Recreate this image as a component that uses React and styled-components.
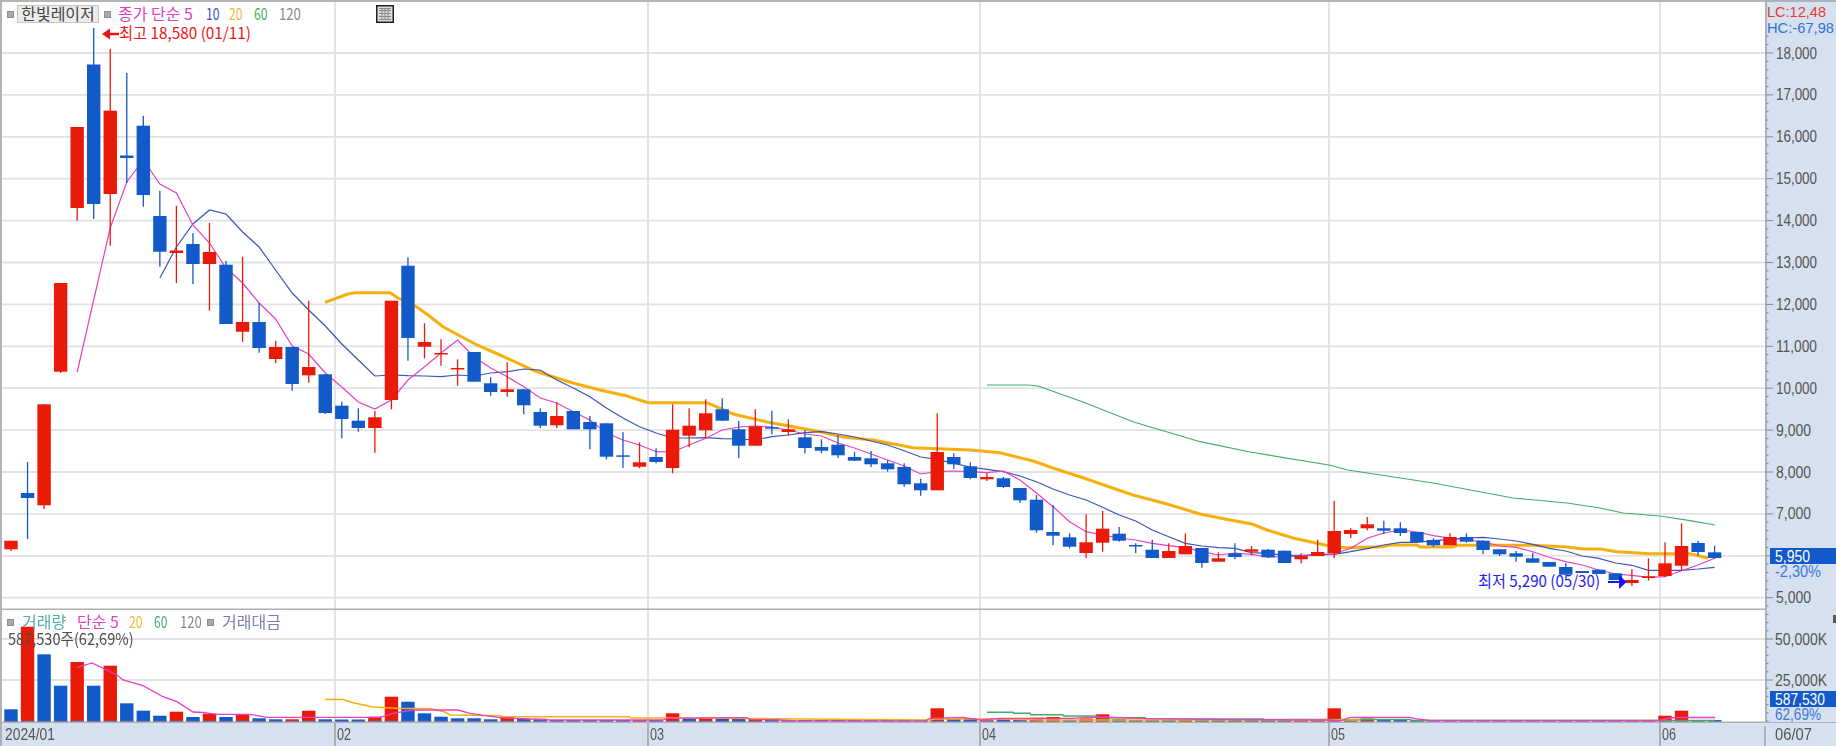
import React from "react";
import styled, { createGlobalStyle } from "styled-components";

const GlobalStyle = createGlobalStyle`
  html, body {
    margin: 0;
    padding: 0;
    background: #fff;
  }
`;

const FONT = `"Liberation Sans", "Noto Sans CJK KR", sans-serif`;
const KR_FONT = `"Noto Sans CJK KR", "Liberation Sans", sans-serif`;

const RED = "#e91b08";
const BLUE = "#1259c9";
const PINK = "#e93fc4";
const NAVY = "#3a55b8";
const ORANGE = "#f5b010";
const GREEN = "#41ad66";

const cx = (i) => 11 + 16.54 * i;

// r/b, body top, body bottom, high, low (in page pixels)
const CANDLES = [
  ["r", 540.7, 549.3, 540.7, 551],
  ["b", 493, 498, 462, 539],
  ["r", 404.3, 505.3, 404.3, 509],
  ["r", 283, 371.7, 283, 373],
  ["r", 127, 208, 127, 220.7],
  ["b", 64.5, 204, 28, 219],
  ["r", 110.7, 194, 49, 245.7],
  ["b", 155.5, 158, 73, 183],
  ["b", 125.7, 195, 115.7, 206.7],
  ["b", 216, 251.7, 190.7, 266.7],
  ["r", 250.5, 253, 205.7, 283],
  ["b", 244, 264, 233, 284],
  ["r", 252, 264, 223, 310.7],
  ["b", 264.7, 324, 261, 324],
  ["r", 322, 331.7, 256.7, 341.7],
  ["b", 322, 348, 303, 352.7],
  ["r", 347, 359, 340.7, 363],
  ["b", 347, 384, 347, 390.7],
  ["r", 367, 375.3, 300.7, 382.7],
  ["b", 374.3, 413, 374.3, 414],
  ["b", 405.7, 419, 401.7, 438.3],
  ["b", 420.7, 428, 408.3, 431.7],
  ["r", 417.3, 428, 411, 452.7],
  ["r", 300.7, 400, 300.7, 409.3],
  ["b", 265.7, 338, 257.3, 360.7],
  ["r", 342, 346.7, 323.3, 358.3],
  ["r", 353, 354.5, 339.3, 365.7],
  ["r", 368, 369.5, 359.3, 385.7],
  ["b", 352, 381.7, 352, 381.7],
  ["b", 383.3, 392, 377.3, 395.7],
  ["r", 389.3, 392, 362.3, 396.7],
  ["b", 389.3, 405.3, 389.3, 414.3],
  ["b", 412, 425.7, 408.3, 428],
  ["r", 416, 425.3, 402.3, 428],
  ["b", 411, 429.3, 411, 429.3],
  ["b", 422, 429.3, 416, 449.3],
  ["b", 423.3, 456.7, 423.3, 459.3],
  ["b", 455.3, 456.8, 432.3, 468],
  ["r", 462.3, 466.7, 442.3, 468.3],
  ["b", 457, 462, 448.3, 463.3],
  ["r", 429.7, 468, 404.3, 473.3],
  ["r", 425.7, 435.7, 408.3, 447.3],
  ["r", 413.3, 430.3, 399.3, 438.3],
  ["b", 409.3, 420.7, 398.3, 421],
  ["b", 429.3, 445.7, 421, 458.3],
  ["r", 426.3, 445.7, 409.3, 445.7],
  ["b", 427.2, 428.7, 410.7, 434.3],
  ["r", 429.3, 432, 419.3, 435.7],
  ["b", 437.3, 448, 430, 453.3],
  ["b", 447, 450.7, 439.3, 453.3],
  ["b", 444.7, 455.3, 435, 458],
  ["b", 457, 460.7, 452, 461],
  ["b", 458.3, 464.3, 451, 467],
  ["b", 463.3, 469.3, 460, 471.7],
  ["b", 467, 484.3, 463.3, 486.7],
  ["b", 483.3, 490.3, 478.7, 495.7],
  ["r", 452, 490.3, 413.3, 490.3],
  ["b", 457, 464.3, 453.3, 469],
  ["b", 466.3, 478, 462.3, 479.3],
  ["r", 477, 479.3, 473.3, 481],
  ["b", 478.3, 487, 477, 488],
  ["b", 488, 500.3, 488, 503],
  ["b", 499.7, 530.3, 495, 532.7],
  ["b", 532, 535.7, 505, 545.3],
  ["b", 537.3, 546.7, 533.3, 548.3],
  ["r", 542.3, 553, 514.3, 558],
  ["r", 528.7, 542.7, 511, 551.7],
  ["b", 533.7, 540.7, 527, 541.7],
  ["b", 545, 546.5, 543.3, 553.3],
  ["b", 549.7, 558, 539.7, 558],
  ["r", 551, 558, 543.3, 558],
  ["r", 546, 554.3, 533.3, 554.3],
  ["b", 548, 563, 548, 567.7],
  ["r", 558.3, 561.7, 552.3, 561.7],
  ["b", 553.3, 557, 543.3, 559.3],
  ["r", 549.3, 551.7, 546, 555.3],
  ["b", 549.7, 557.3, 549, 558],
  ["b", 550.7, 563, 550.7, 563],
  ["r", 556, 559.3, 553.3, 563.3],
  ["r", 552, 556, 539.7, 556],
  ["r", 531, 553.3, 500.7, 558],
  ["r", 530, 534, 528.3, 538],
  ["r", 524.3, 528.3, 517, 530.3],
  ["b", 528.3, 530.7, 520.7, 534],
  ["b", 528.3, 533, 522.3, 536],
  ["b", 532, 542, 532, 542],
  ["b", 540, 545.3, 538.3, 547],
  ["r", 537, 545.3, 533.3, 545.3],
  ["b", 537, 541.7, 533.3, 542.7],
  ["b", 540.7, 550, 540, 554.3],
  ["b", 549.3, 554.3, 549, 556],
  ["b", 553.3, 556.7, 551, 561.7],
  ["b", 558.3, 562.7, 552.7, 562.7],
  ["b", 562, 566.7, 562, 566.7],
  ["b", 567, 574.7, 563.3, 574.7],
  ["b", 571, 573, 571, 573],
  ["b", 569.7, 574, 569.7, 574],
  ["b", 573.3, 580, 573.3, 580],
  ["r", 580, 583, 569.3, 586],
  ["r", 576.3, 578, 558.3, 580.7],
  ["r", 563.3, 576, 542.3, 577],
  ["r", 546, 565.7, 523.3, 571],
  ["b", 543, 552, 540.7, 555.7],
  ["b", 552.3, 558, 545.7, 559],
];

const MA5 = [372, 300, 228, 182, 160, 184, 193, 225, 243, 268, 283, 303, 319, 346, 354, 373, 387, 402, 409, 400, 380, 366.7, 353, 340, 357, 368, 376.7, 386.7, 398, 403, 411.7, 420, 433, 440, 445, 451.7, 452, 445, 438.3, 430, 427, 426, 427, 430, 434, 436, 443, 448, 454, 460, 466, 474, 471.7, 471, 471.7, 472.7, 471, 480, 493, 506.7, 521.7, 531.7, 535, 538, 540, 543.3, 545.7, 547.7, 551.7, 555, 553, 554.3, 557, 556.7, 556, 554, 554, 548.3, 538.3, 533, 530, 532, 535.7, 538, 540, 541.7, 546, 547.3, 551.7, 557.3, 561.7, 565, 570, 574, 575.3, 577.3, 576.7, 570.7, 565, 558.3];

const MA10 = [278, 247, 224, 210, 214, 232, 247, 270, 293, 310, 326, 344, 360, 376, 375, 375.7, 376, 376.7, 375, 376, 373, 371.7, 369, 370, 380, 388, 396.7, 408, 418, 426.7, 433, 438, 438, 437.7, 438.7, 439, 440, 436.7, 435, 432.7, 431.7, 434, 437, 441, 445, 450.7, 457, 459.3, 463.3, 467, 469.3, 471.7, 476, 481.7, 489, 495, 500, 507.3, 515, 521, 530, 536.7, 543.3, 546, 547.7, 548.3, 552.7, 553.3, 555.3, 555.3, 554.7, 554.3, 551.7, 548.7, 545, 542.3, 542.3, 540.7, 539.3, 538, 537.3, 539, 541, 544.3, 548.3, 551, 556, 558.3, 563, 565.3, 570.3, 570.3, 570.3, 569, 567.3];

const MA20_LINE = "325,302.3 348,294 355,292.7 390,292.7 398,298 417,307 428,315 443,326.7 477,345 500,355 533,370 547,375 573,383 600,390 627,396 648,402.7 707,402.7 733,414 767,422 800,428 820,431.7 843,437 873,440 913,447.7 970,450 1000,452.7 1033,461 1053,468 1080,476.7 1133,495 1167,504 1200,514 1230,520 1252,524 1267,530 1293,538 1333,546.7 1347,547.7 1383,546.7 1390,545 1417,545 1420,547 1453,547 1457,545.3 1533,545.3 1567,547 1583,549 1600,549 1617,551.7 1650,553.7 1690,553.7 1708,558";
const MA60_LINE = "987,385 1028,385 1038,386 1083,402 1133,421.7 1200,441.7 1250,452 1329,465 1348,470 1433,483 1513,498 1567,503 1600,508 1623,513 1660,516 1690,520.7 1715,525";

const VOLUMES = [
  ["b", 709.3], ["r", 626.7], ["b", 654.3], ["b", 685.7], ["r", 662], ["b", 685.7], ["r", 665.7], ["b", 703.3],
  ["b", 710.7], ["b", 715.7], ["r", 711.7], ["b", 717], ["r", 713.7], ["b", 717], ["r", 714.7], ["b", 718.3],
  ["b", 719.3], ["r", 719.3], ["r", 710.7], ["b", 719.3], ["b", 719.5], ["b", 719.5], ["r", 716.7], ["r", 696.7],
  ["b", 701.7], ["b", 713.3], ["b", 716.7], ["b", 718.3], ["b", 718.3], ["b", 719.3], ["r", 716], ["b", 718.7],
  ["b", 718.7], ["b", 720], ["b", 720], ["b", 720], ["b", 720], ["b", 720], ["r", 720], ["b", 720],
  ["r", 713.3], ["b", 718.3], ["r", 717.7], ["b", 717.7], ["b", 718.5], ["r", 719], ["b", 719], ["r", 720],
  ["b", 720], ["b", 720], ["b", 720], ["b", 720], ["b", 720], ["b", 720], ["b", 720], ["b", 720],
  ["r", 708.3], ["b", 719], ["b", 718.3], ["r", 720.5], ["b", 719], ["b", 720], ["r", 717.7], ["r", 717],
  ["b", 720], ["r", 718.5], ["r", 714.3], ["b", 719], ["b", 720], ["b", 720], ["b", 720], ["r", 720],
  ["b", 720], ["b", 720], ["b", 720], ["b", 720], ["b", 720], ["b", 720], ["r", 720], ["r", 720],
  ["r", 708.3], ["b", 719], ["r", 718.5], ["b", 720], ["b", 720], ["b", 720], ["b", 720], ["b", 720],
  ["b", 720], ["b", 720], ["b", 720], ["b", 720], ["b", 720], ["b", 720], ["b", 720], ["b", 720],
  ["b", 720], ["b", 720], ["r", 720], ["r", 720], ["r", 715.7], ["r", 710.7], ["b", 720], ["b", 720],
];

const VOL_MA5 = "77,667.7 92,663 117,675 123,680 143,685.7 163,696.7 177,701.7 193,712 203,712.5 217,714.3 250,714.3 267,717.3 380,717.3 393,713.3 413,710 458,710 470,713.3 500,717.7 550,720 663,720 667,718.3 730,717.7 747,717.7 750,719.3 780,720 797,721 925,721 930,718.3 963,717.3 980,720 1000,718.3 1070,718.3 1100,717 1150,718.7 1230,719.7 1330,720 1340,721 1350,717.3 1410,717.3 1415,718.7 1430,720.5 1660,720.5 1670,718 1680,717.5 1715,717.5";
const VOL_MA20 = "325,699.5 343,699.5 353,702.7 373,707 400,708.5 430,708.5 445,712 450,715 500,715.7 503,716.7 630,716.7 631,718 700,718 800,719 930,720 935,719 1000,719 1040,720 1360,720";
const VOL_MA60 = "987,712.3 1013,712.3 1014,713.3 1030,713.3 1031,714.7 1063,714.7 1064,716 1097,716 1098,717.7 1145,717.7 1146,719 1263,719 1264,719.5 1410,719.5 1412,720.5 1715,720.5";

const MONTH_LINES = [335, 648, 980, 1329, 1660];
const PRICE_Y = (price) => 53 + (41.9 * (18000 - price)) / 1000;
const PRICE_LEVELS = [18000, 17000, 16000, 15000, 14000, 13000, 12000, 11000, 10000, 9000, 8000, 7000, 6000, 5000];
const VOL_GRID = [639, 680];

const fmt = (n) => n.toLocaleString("en-US");

const Page = styled.div`
  width: 1836px;
  height: 746px;
  display: grid;
  grid-template-columns: 1765px 71px;
  grid-template-rows: 610px 113px 23px;
  overflow: hidden;
  filter: blur(0.35px);
  font-family: ${FONT};
`;

const ChartPanel = styled.div`
  position: relative;
  background: #fff;
  box-shadow: inset 2px ${(p) => (p.$top ? "2px" : "0")} 0 #b4b4b4;
`;

const AxisPanel = styled.div`
  background: #d6e1ef;
  box-shadow: inset 2px ${(p) => (p.$top ? "2px" : "0")} 0 #a9b2bd;
`;

const TimeBar = styled.div`
  grid-column: 1 / 3;
  background: #d6e1ef;
`;

const Drawing = styled.svg`
  display: block;
  width: 100%;
  height: 100%;
`;

const Legend = styled.div`
  position: absolute;
  left: 7px;
  top: ${(p) => p.$top}px;
  height: 18px;
  display: flex;
  align-items: center;
  font-family: ${KR_FONT};
  font-size: 16px;
  line-height: 16px;
  white-space: nowrap;
`;

const Bullet = styled.span`
  width: 5px;
  height: 5px;
  flex: none;
  background: #a9a9a9;
  border: 1px solid #8e8e8e;
  margin-left: ${(p) => p.$before || 0}px;
  margin-right: ${(p) => p.$after || 0}px;
`;

const NameButton = styled.button`
  width: 82px;
  height: 18px;
  margin: 0 5px 0 3px;
  padding: 0 0 3px;
  background: #ececec;
  border: 1px solid #c4c4c4;
  color: #444;
  font: inherit;
  line-height: 14px;
  white-space: nowrap;
`;

const LegendItem = styled.span`
  flex: none;
  width: ${(p) => p.$w}px;
  margin-left: ${(p) => p.$gap || 0}px;
  margin-top: -2px;
  color: ${(p) => p.$color};
  transform: scaleX(${(p) => p.$squeeze || 1});
  transform-origin: left center;
`;

const GridIconBox = styled.svg`
  width: 18px;
  height: 18px;
  margin-left: 75px;
  flex: none;
`;

const Note = styled.div`
  position: absolute;
  left: 8px;
  top: 21px;
  color: #4c4c4c;
  font-family: ${KR_FONT};
  font-size: 16px;
  line-height: 14px;
  white-space: nowrap;
  transform: scaleX(0.91);
  transform-origin: left center;
`;

const Mark = styled.text`
  font-family: ${FONT};
  font-size: ${(p) => p.$size || 16}px;
  fill: ${(p) => p.$color || "#555"};
  dominant-baseline: central;
`;

const KrMark = styled(Mark)`
  font-family: ${KR_FONT};
`;

const Label = ({ x, y, w, color, size, kr, children }) => {
  const Comp = kr ? KrMark : Mark;
  return (
    <Comp x={x} y={y} textLength={w} lengthAdjust="spacingAndGlyphs" $color={color} $size={size}>
      {children}
    </Comp>
  );
};

const pointsFrom = (values, start) => values.map((v, i) => `${cx(start + i).toFixed(1)},${v}`).join(" ");

const Candle = ({ i, data }) => {
  const [kind, top, bottom, high, low] = data;
  const fill = kind === "r" ? RED : BLUE;
  const x = cx(i);
  return (
    <g>
      <line x1={x} x2={x} y1={high} y2={low} stroke={fill} strokeWidth="1.3" />
      <rect x={x - 6.7} y={top} width="13.4" height={bottom - top} fill={fill} />
    </g>
  );
};

const GridIcon = () => (
  <GridIconBox viewBox="0 0 18 18">
    <rect x="0.75" y="0.75" width="16.5" height="16.5" fill="#dcdcdc" stroke="#222" strokeWidth="1.5" />
    <path d="M3 5.5H15M3 8.5H15M3 11.5H15M3 14.5H15M3 3.5H15M6 3.5V15M9 3.5V15M12 3.5V15" stroke="#8a8a8a" strokeWidth="1" fill="none" />
  </GridIconBox>
);

const PriceChart = () => (
  <Drawing viewBox="0 0 1765 610">
    {PRICE_LEVELS.map((p) => (
      <line key={p} x1="2" x2="1765" y1={PRICE_Y(p)} y2={PRICE_Y(p)} stroke="#e2e2e2" strokeWidth="1.8" />
    ))}
    {MONTH_LINES.map((x) => (
      <line key={x} x1={x} x2={x} y1="2" y2="610" stroke="#e0e0e0" strokeWidth="1.8" />
    ))}
    <line x1="0" x2="1765" y1="609.5" y2="609.5" stroke="#b0b0b0" strokeWidth="2" />
    <polyline points={MA60_LINE} fill="none" stroke={GREEN} strokeWidth="1.2" />
    <polyline points={MA20_LINE} fill="none" stroke={ORANGE} strokeWidth="3" />
    <polyline points={pointsFrom(MA10, 9)} fill="none" stroke={NAVY} strokeWidth="1.2" />
    <polyline points={pointsFrom(MA5, 4)} fill="none" stroke={PINK} strokeWidth="1.2" />
    {CANDLES.map((c, i) => (
      <Candle key={i} i={i} data={c} />
    ))}
    {/* high / low markers */}
    <path d="M102 34L110 28.5V32.8H119V35.2H110V39.5Z" fill="#f01010" />
    <Label x={119} y={32} w={132} color="#f01414" size={16} kr>
      최고 18,580 (01/11)
    </Label>
    <Label x={1478} y={580} w={122} color="#2222ee" size={16} kr>
      최저 5,290 (05/30)
    </Label>
    <path d="M1608 581H1619V575L1626.5 582L1619 589V583H1608Z" fill="#1a10f0" />
  </Drawing>
);

const PriceAxis = () => {
  const minors = [];
  for (let p = 18400; p >= 4800; p -= 200) minors.push(p);
  return (
    <Drawing viewBox="1765 0 71 610">
      {minors.map((p) => (
        <line key={p} x1="1766" x2={p % 1000 === 0 ? 1773 : 1768.5} y1={PRICE_Y(p)} y2={PRICE_Y(p)} stroke="#7d8790" strokeWidth="1" />
      ))}
      <Label x={1767} y={11} w={59} color="#e83a2c" size={15}>
        LC:12,48
      </Label>
      <Label x={1767} y={27} w={67} color="#2f72d8" size={15}>
        HC:-67,98
      </Label>
      {PRICE_LEVELS.map((p) => (
        <Label key={p} x={1776} y={PRICE_Y(p)} w={p >= 10000 ? 41 : 35}>
          {fmt(p)}
        </Label>
      ))}
      <rect x="1770" y="548" width="66" height="16" fill={BLUE} />
      <Label x={1775} y={556} w={35} color="#fff">
        5,950
      </Label>
      <Label x={1775} y={571.5} w={46} color="#3a78d8">
        -2,30%
      </Label>
    </Drawing>
  );
};

const VolumeChart = () => (
  <Drawing viewBox="0 610 1765 113">
    {VOL_GRID.map((y) => (
      <line key={y} x1="2" x2="1765" y1={y} y2={y} stroke="#e2e2e2" strokeWidth="1.8" />
    ))}
    {MONTH_LINES.map((x) => (
      <line key={x} x1={x} x2={x} y1="610" y2="723" stroke="#e0e0e0" strokeWidth="1.8" />
    ))}
    {VOLUMES.map(([kind, top], i) => (
      <rect key={i} x={cx(i) - 6.7} y={top} width="13.4" height={722 - top} fill={kind === "r" ? RED : BLUE} />
    ))}
    {VOLUMES.map((_, i) => (
      <rect key={i} x={cx(i) - 6.7} y="720" width="13.4" height="2" fill="#4f5aa8" opacity="0.55" />
    ))}
    <polyline points={VOL_MA60} fill="none" stroke={GREEN} strokeWidth="1.6" />
    <polyline points={VOL_MA20} fill="none" stroke={ORANGE} strokeWidth="1.5" />
    <polyline points={VOL_MA5} fill="none" stroke={PINK} strokeWidth="1.3" />
    <line x1="0" x2="1765" y1="722.5" y2="722.5" stroke="#b0b0b0" strokeWidth="2" />
  </Drawing>
);

const VolumeAxis = () => {
  const ticks = [];
  for (let y = 721; y > 612; y -= 8.2) ticks.push(y);
  return (
    <Drawing viewBox="1765 610 71 113">
      {ticks.map((y, i) => (
        <line key={i} x1="1766" x2={i === 5 || i === 10 ? 1773 : 1768.5} y1={y} y2={y} stroke="#7d8790" strokeWidth="1" />
      ))}
      <rect x="1833" y="615" width="3" height="8" fill="#5c5c5c" />
      <Label x={1775} y={639} w={52}>
        50,000K
      </Label>
      <Label x={1775} y={680} w={52}>
        25,000K
      </Label>
      <rect x="1770" y="691" width="66" height="16" fill={BLUE} />
      <Label x={1775} y={699} w={50} color="#fff">
        587,530
      </Label>
      <Label x={1775} y={714} w={46} color="#3a78d8">
        62,69%
      </Label>
      <line x1="1765" x2="1836" y1="722.5" y2="722.5" stroke="#a9b2bd" strokeWidth="1" />
    </Drawing>
  );
};

const TimeAxis = () => (
  <Drawing viewBox="0 723 1836 23">
    <line x1="1" x2="1" y1="723" y2="746" stroke="#a9b2bd" strokeWidth="2" />
    <line x1="1765" x2="1765" y1="726" y2="746" stroke="#a9b2bd" strokeWidth="2" />
    {MONTH_LINES.map((x) => (
      <line key={x} x1={x} x2={x} y1="723" y2="746" stroke="#a9a9a9" strokeWidth="1.8" />
    ))}
    <Label x={5} y={734} w={50}>2024/01</Label>
    <Label x={337} y={734} w={14}>02</Label>
    <Label x={650} y={734} w={14}>03</Label>
    <Label x={982} y={734} w={14}>04</Label>
    <Label x={1331} y={734} w={14}>05</Label>
    <Label x={1662} y={734} w={14}>06</Label>
    <Label x={1775} y={734} w={37}>06/07</Label>
  </Drawing>
);

const App = () => (
  <>
    <GlobalStyle />
    <Page>
      <ChartPanel $top>
        <PriceChart />
        <Legend $top={5}>
          <Bullet />
          <NameButton>한빛레이저</NameButton>
          <Bullet $after={7} />
          <LegendItem $w={76} $color="#e040c0">종가 단순 5</LegendItem>
          <LegendItem $w={14} $gap={12} $color="#3a50b8" $squeeze={0.76}>10</LegendItem>
          <LegendItem $w={14} $gap={9} $color="#f5b82e" $squeeze={0.76}>20</LegendItem>
          <LegendItem $w={14} $gap={11} $color="#3cb060" $squeeze={0.76}>60</LegendItem>
          <LegendItem $w={22} $gap={11} $color="#888" $squeeze={0.82}>120</LegendItem>
          <GridIcon />
        </Legend>
      </ChartPanel>
      <AxisPanel $top>
        <PriceAxis />
      </AxisPanel>
      <ChartPanel>
        <VolumeChart />
        <Legend $top={3}>
          <Bullet $after={8} />
          <LegendItem $w={45} $color="#50b0a8">거래량</LegendItem>
          <LegendItem $w={41} $gap={10} $color="#e040c0">단순 5</LegendItem>
          <LegendItem $w={14} $gap={11} $color="#f5b82e" $squeeze={0.76}>20</LegendItem>
          <LegendItem $w={14} $gap={11} $color="#3cb060" $squeeze={0.76}>60</LegendItem>
          <LegendItem $w={21} $gap={12} $color="#888" $squeeze={0.82}>120</LegendItem>
          <Bullet $before={6} $after={8} />
          <LegendItem $w={60} $color="#7880b0">거래대금</LegendItem>
        </Legend>
        <Note>587,530주(62,69%)</Note>
      </ChartPanel>
      <AxisPanel>
        <VolumeAxis />
      </AxisPanel>
      <TimeBar>
        <TimeAxis />
      </TimeBar>
    </Page>
  </>
);

export default App;
